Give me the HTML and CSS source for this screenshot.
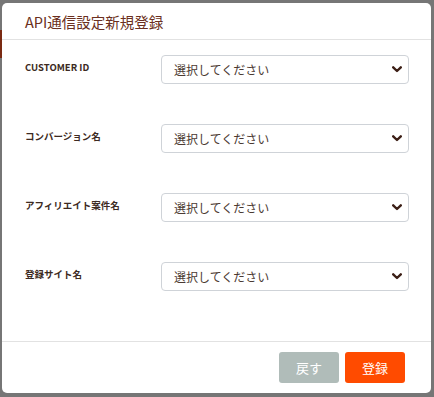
FILE: index.html
```html
<!DOCTYPE html>
<html lang="ja">
<head>
  <meta charset="UTF-8" />
  <meta name="viewport" content="width=device-width, initial-scale=1.0"/>
  <title>API通信設定新規登録</title>
  <link rel="stylesheet" href="styles.css">
</head>
<body>

  <div class="backdrop-mark"></div>

  <div class="modal">
    <div class="modal-header">
      <h2>API通信設定新規登録</h2>
    </div>

    <div class="modal-body">
      <div class="form-row">
        <label>CUSTOMER ID</label>
        <div class="select-wrap">
          <select><option>選択してください</option></select>
          <svg class="chevron" viewBox="0 0 10 7"><path d="M1.2 1.3 L5 5 L8.8 1.3" /></svg>
        </div>
      </div>
      <div class="form-row">
        <label>コンバージョン名</label>
        <div class="select-wrap">
          <select><option>選択してください</option></select>
          <svg class="chevron" viewBox="0 0 10 7"><path d="M1.2 1.3 L5 5 L8.8 1.3" /></svg>
        </div>
      </div>
      <div class="form-row">
        <label>アフィリエイト案件名</label>
        <div class="select-wrap">
          <select><option>選択してください</option></select>
          <svg class="chevron" viewBox="0 0 10 7"><path d="M1.2 1.3 L5 5 L8.8 1.3" /></svg>
        </div>
      </div>
      <div class="form-row">
        <label>登録サイト名</label>
        <div class="select-wrap">
          <select><option>選択してください</option></select>
          <svg class="chevron" viewBox="0 0 10 7"><path d="M1.2 1.3 L5 5 L8.8 1.3" /></svg>
        </div>
      </div>
    </div>

    <div class="modal-footer">
      <button class="btn btn-back">戻す</button>
      <button class="btn btn-submit">登録</button>
    </div>
  </div>

</body>
</html>
```

FILE: styles.css
```css
body {
  margin: 0;
  font-family: 'Noto Sans CJK JP', 'Noto Sans', sans-serif;
  background-color: #767676;
  width: 434px;
  height: 397px;
  overflow: hidden;
  position: relative;
}

.backdrop-mark {
  position: absolute;
  left: 0;
  top: 30px;
  width: 2px;
  height: 28px;
  background-color: #7a2a12;
}

.modal {
  margin: 3px 3px 0 2px;
  width: 429px;
  height: 390px;
  background-color: #fff;
  border-radius: 5px;
  display: flex;
  flex-direction: column;
}

.modal-header {
  height: 36px;
  padding-left: 23px;
  border-bottom: 1px solid #e2e2e2;
  display: flex;
  align-items: center;
}

.modal-header h2 {
  margin: 0;
  font-size: 14.5px;
  font-weight: 400;
  color: #6b2f20;
}

.modal-body {
  flex: 1;
  padding: 15px 22px 0 23px;
  display: flex;
  flex-direction: column;
  gap: 40px;
  border-bottom: 1px solid #e2e2e2;
}

.form-row {
  display: flex;
  align-items: flex-start;
}

.form-row label {
  width: 136px;
  padding-top: 5px;
  font-size: 9.5px;
  font-weight: 700;
  line-height: 14px;
  color: #3c2a22;
}

.select-wrap {
  position: relative;
  width: 248px;
}

.select-wrap select {
  appearance: none;
  -webkit-appearance: none;
  width: 100%;
  height: 29px;
  padding: 0 0 0 12px;
  border: 1px solid #cfd3d8;
  border-radius: 4px;
  background-color: #fff;
  font-family: 'Noto Sans CJK JP', 'Noto Sans', sans-serif;
  font-size: 12px;
  color: #4b3a32;
}

.chevron {
  position: absolute;
  right: 7px;
  top: 11px;
  width: 10px;
  height: 7px;
  fill: none;
  stroke: #3c1f16;
  stroke-width: 2.4;
  stroke-linecap: round;
  stroke-linejoin: round;
}

.modal-footer {
  height: 51px;
  padding-right: 26px;
  display: flex;
  justify-content: flex-end;
  align-items: center;
  gap: 6px;
}

.btn {
  width: 60px;
  height: 31px;
  border: none;
  border-radius: 3px;
  color: #fff;
  font-family: 'Noto Sans CJK JP', 'Noto Sans', sans-serif;
  font-size: 13px;
  cursor: pointer;
}

.btn-back {
  background-color: #b0bcb9;
}

.btn-submit {
  background-color: #ff4b00;
}
```
